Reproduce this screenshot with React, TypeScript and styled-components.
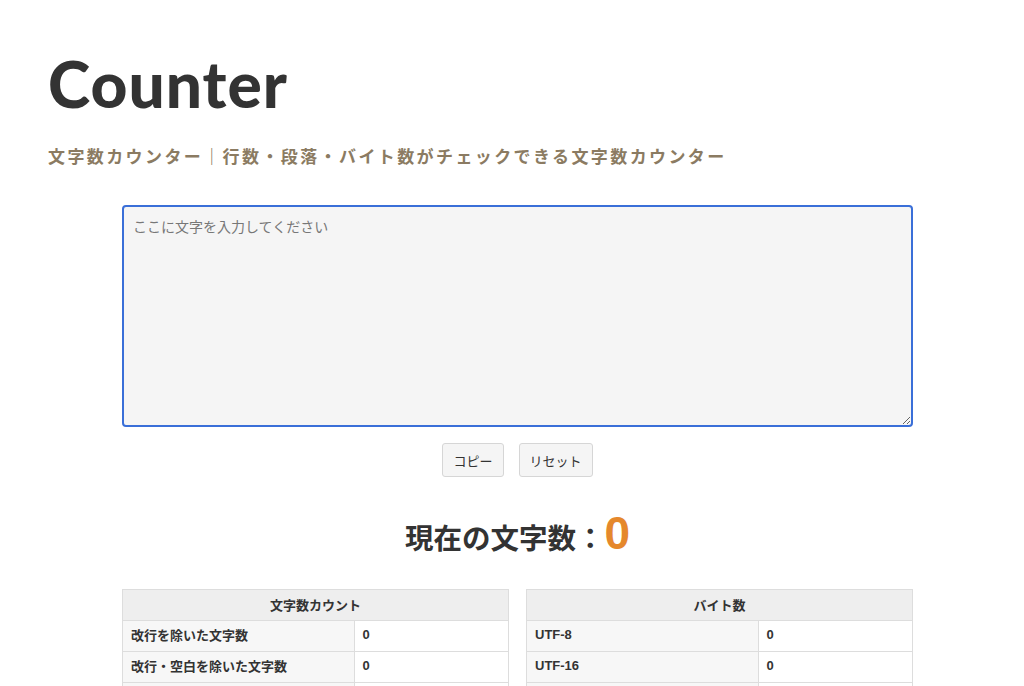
import React, { useState } from 'react';
import styled, { createGlobalStyle } from 'styled-components';

const GlobalStyle = createGlobalStyle`
  html, body {
    margin: 0;
    padding: 0;
    background: #fff;
    font-family: "Noto Sans CJK JP", "Noto Sans", sans-serif;
    color: #333;
  }
  * { box-sizing: border-box; }
`;

const countRows = [
  { label: '改行を除いた文字数', key: 'noBreak' },
  { label: '改行・空白を除いた文字数', key: 'noSpace' },
  { label: '行数', key: 'lines' },
];

const byteRows = [
  { label: 'UTF-8', key: 'utf8' },
  { label: 'UTF-16', key: 'utf16' },
  { label: 'Shift_JIS', key: 'sjis' },
];

export default function App() {
  const [text, setText] = useState('');

  const stats: Record<string, number> = {
    noBreak: text.replace(/\n/g, '').length,
    noSpace: text.replace(/\s/g, '').length,
    lines: text ? text.split('\n').length : 0,
    utf8: new TextEncoder().encode(text).length,
    utf16: text.length * 2,
    sjis: 0,
  };

  return (
    <Page>
      <GlobalStyle />
      <Title>Counter</Title>
      <Subtitle>文字数カウンター｜行数・段落・バイト数がチェックできる文字数カウンター</Subtitle>

      <Main>
        <TextArea
          autoFocus
          placeholder="ここに文字を入力してください"
          value={text}
          onChange={(e) => setText(e.target.value)}
        />
        <Buttons>
          <Button onClick={() => navigator.clipboard?.writeText(text)}>コピー</Button>
          <Button onClick={() => setText('')}>リセット</Button>
        </Buttons>

        <Current>
          現在の文字数：<Num>{text.length}</Num>
        </Current>

        <Tables>
          <Table>
            <thead>
              <tr>
                <Head colSpan={2}>文字数カウント</Head>
              </tr>
            </thead>
            <tbody>
              {countRows.map((r) => (
                <tr key={r.key}>
                  <Label>{r.label}</Label>
                  <Value>{stats[r.key]}</Value>
                </tr>
              ))}
            </tbody>
          </Table>
          <Table>
            <thead>
              <tr>
                <Head colSpan={2}>バイト数</Head>
              </tr>
            </thead>
            <tbody>
              {byteRows.map((r) => (
                <tr key={r.key}>
                  <Label $latin>{r.label}</Label>
                  <Value>{stats[r.key]}</Value>
                </tr>
              ))}
            </tbody>
          </Table>
        </Tables>
      </Main>
    </Page>
  );
}

const Page = styled.div`
  padding: 44px 48px 40px;
`;

const Title = styled.h1`
  margin: 0;
  font-family: "Lato", "Noto Sans", sans-serif;
  font-weight: 900;
  font-size: 64px;
  line-height: 80px;
  letter-spacing: 1px;
  color: #333;
`;

const Subtitle = styled.p`
  margin: 20px 0 0;
  font-size: 17px;
  line-height: 24px;
  font-weight: 700;
  letter-spacing: 2.4px;
  color: #8b7b62;
  white-space: nowrap;
`;

const Main = styled.main`
  width: 791px;
  margin: 37px 0 0 74px;
  display: flex;
  flex-direction: column;
  align-items: center;
`;

const TextArea = styled.textarea`
  display: block;
  width: 100%;
  height: 222px;
  padding: 8px 9px;
  border: 2px solid #3a6fd8;
  border-radius: 4px;
  background: #f5f5f5;
  outline: none;
  resize: vertical;
  font-family: "Noto Sans CJK JP", sans-serif;
  font-size: 14px;
  line-height: 22px;
  color: #333;

  &::placeholder {
    color: #777;
  }
`;

const Buttons = styled.div`
  display: flex;
  gap: 15px;
  margin-top: 16px;
`;

const Button = styled.button`
  height: 34px;
  padding: 0 10px;
  border: 1px solid #d6d6d6;
  border-radius: 3px;
  background: #f5f5f5;
  font-family: "Noto Sans CJK JP", sans-serif;
  font-size: 13px;
  color: #333;
  cursor: pointer;
`;

const Current = styled.div`
  margin-top: 32px;
  font-size: 28.5px;
  font-weight: 700;
  line-height: 48px;
  color: #333;
  display: flex;
  align-items: baseline;
`;

const Num = styled.span`
  font-family: "Liberation Sans", "Noto Sans", sans-serif;
  font-size: 46px;
  line-height: 48px;
  color: #e5882c;
`;

const Tables = styled.div`
  width: 100%;
  margin-top: 28px;
  display: grid;
  grid-template-columns: 387px 387px;
  justify-content: space-between;
`;

const Table = styled.table`
  width: 100%;
  border-collapse: collapse;
  font-size: 13px;
`;

const Head = styled.th`
  height: 31px;
  padding: 0 0 2px;
  background: #eee;
  border: 1px solid #ddd;
  font-weight: 700;
  text-align: center;
`;

const Label = styled.td<{ $latin?: boolean }>`
  width: 60%;
  height: 31px;
  padding: 0 8px 3px;
  background: #f7f7f7;
  border: 1px solid #ddd;
  font-weight: 700;
  font-family: ${(p) => (p.$latin ? '"Liberation Sans", sans-serif' : '"Noto Sans CJK JP", sans-serif')};
`;

const Value = styled.td`
  height: 31px;
  padding: 0 8px 3px;
  background: #fff;
  border: 1px solid #ddd;
  font-weight: 700;
  font-family: "Liberation Sans", sans-serif;
`;
